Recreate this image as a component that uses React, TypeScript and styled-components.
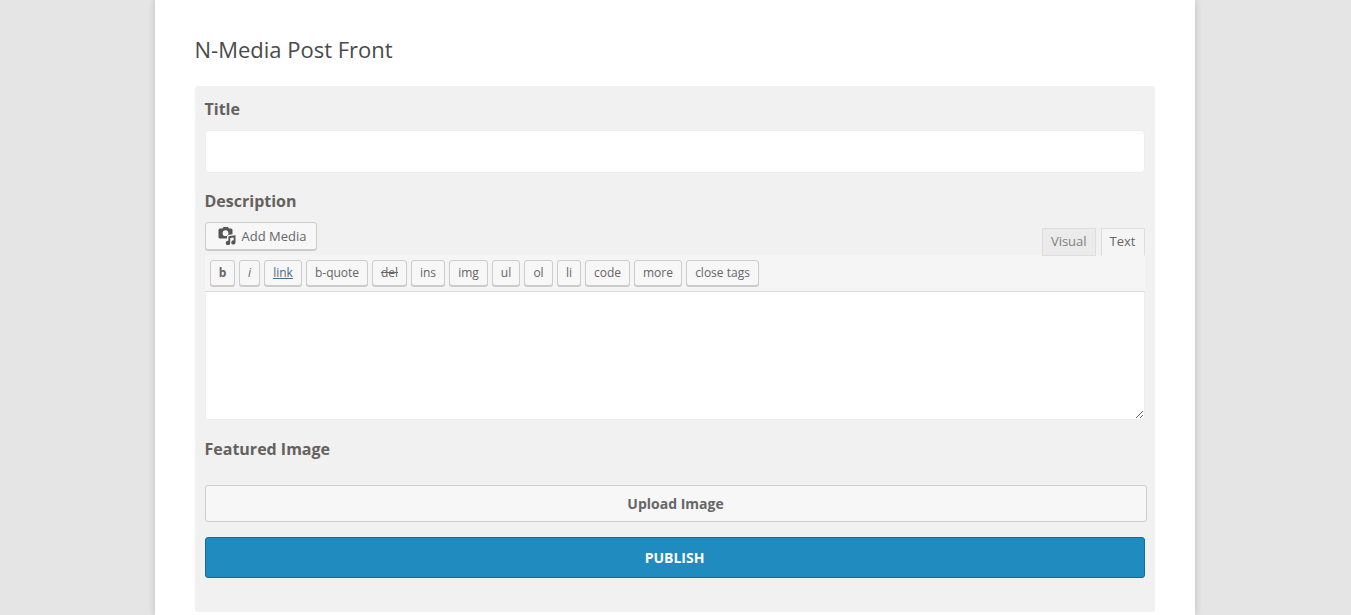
import React from "react";
import styled, { createGlobalStyle } from "styled-components";

const Global = createGlobalStyle`
  html, body { margin: 0; padding: 0; background: #e5e5e5; overflow: hidden; }
  body { font-family: "Open Sans", "Liberation Sans", sans-serif; color: #555; }
  * { box-sizing: border-box; }
`;

const Page = styled.div`
  width: 1351px;
  height: 615px;
  overflow: hidden;
  display: flex;
  justify-content: center;
  padding-right: 1px;
`;

const Card = styled.main`
  width: 1040px;
  height: 615px;
  flex: none;
  margin-left: -1px;
  background: #fff;
  box-shadow: 0 0 7px rgba(0, 0, 0, 0.18);
  padding: 34px 40px 0;
`;

const Heading = styled.h1`
  margin: 0 0 21px;
  font-size: 22px;
  line-height: 31px;
  font-weight: 400;
  color: #4a4a4a;
`;

const Form = styled.form`
  height: 526px;
  background: #f1f1f1;
  border-radius: 3px;
  padding: 10px;
  display: flex;
  flex-direction: column;
`;

const Label = styled.label<{ $mt?: number }>`
  display: block;
  font-size: 16px;
  line-height: 26px;
  font-weight: 700;
  color: #65615d;
  margin-top: ${(p) => p.$mt ?? 0}px;
`;

const TitleInput = styled.input`
  display: block;
  width: 940px;
  height: 43px;
  margin-top: 8px;
  border: 1px solid #eee;
  border-radius: 4px;
  background: #fff;
  outline: none;
`;

const EditorTop = styled.div`
  display: flex;
  justify-content: space-between;
  align-items: flex-end;
  height: 34px;
  width: 940px;
  margin-top: 8px;
`;

const MediaButton = styled.button`
  align-self: flex-start;
  display: inline-flex;
  align-items: center;
  width: 112px;
  height: 28px;
  padding: 0 0 0 12px;
  border: 1px solid #ccc;
  border-radius: 3px;
  background: #f7f7f7;
  box-shadow: 0 1px 0 #ccc;
  font: 400 13px "Open Sans", sans-serif;
  color: #666;
`;

const MediaIcon = styled.svg`
  width: 18px;
  height: 18px;
  margin-right: 6px;
  fill: #555;
  flex: none;
`;

const Tabs = styled.div`
  display: flex;
  gap: 5px;
  position: relative;
  z-index: 1;
`;

const Tab = styled.button<{ $active?: boolean }>`
  height: 28px;
  padding: 0 8px 2px;
  border: 1px solid #ddd;
  border-bottom-color: ${(p) => (p.$active ? "#f5f5f5" : "#ddd")};
  background: ${(p) => (p.$active ? "#f5f5f5" : "#ebebeb")};
  font: 400 13px "Open Sans", sans-serif;
  color: ${(p) => (p.$active ? "#666" : "#808080")};
`;

const Toolbar = styled.div`
  width: 940px;
  height: 37px;
  padding: 5px 5px 0;
  margin-top: -1px;
  display: flex;
  gap: 4px;
  background: #f5f5f5;
  border-bottom: 1px solid #ddd;
`;

const QuickTag = styled.button<{ $w: number; $bold?: boolean; $italic?: boolean; $link?: boolean; $strike?: boolean }>`
  width: ${(p) => p.$w}px;
  height: 26px;
  padding: 0 0 1px 1px;
  border: 1px solid #ccc;
  border-radius: 3px;
  background: #f7f7f7;
  box-shadow: 0 1px 0 #ccc;
  font-family: "Open Sans", sans-serif;
  font-size: 12px;
  font-weight: ${(p) => (p.$bold ? 700 : 400)};
  font-style: ${(p) => (p.$italic ? "italic" : "normal")};
  text-decoration: ${(p) => (p.$link ? "underline" : p.$strike ? "line-through" : "none")};
  color: ${(p) => (p.$link ? "#4a6a85" : "#666")};
`;

const TextArea = styled.textarea`
  display: block;
  width: 940px;
  height: 128px;
  border: 1px solid #eee;
  border-top: 0;
  border-radius: 0 0 3px 3px;
  background: #fff;
  outline: none;
  resize: vertical;
`;

const UploadButton = styled.button`
  display: block;
  width: 942px;
  height: 37px;
  margin-top: 23px;
  flex: none;
  border: 1px solid #ccc;
  border-radius: 3px;
  background: #f7f7f7;
  font: 700 14px "Open Sans", sans-serif;
  color: #666;
`;

const PublishButton = styled.button`
  display: block;
  width: 940px;
  height: 41px;
  margin-top: 15px;
  flex: none;
  border: 1px solid #0b6f9f;
  border-radius: 3px;
  background: #1f8bbf;
  font: 700 14px "Open Sans", sans-serif;
  color: #fff;
`;

const tags = [
  { t: "b", w: 25, bold: true },
  { t: "i", w: 21, italic: true },
  { t: "link", w: 38, link: true },
  { t: "b-quote", w: 62 },
  { t: "del", w: 35, strike: true },
  { t: "ins", w: 34 },
  { t: "img", w: 39 },
  { t: "ul", w: 28 },
  { t: "ol", w: 29 },
  { t: "li", w: 24 },
  { t: "code", w: 45 },
  { t: "more", w: 48 },
  { t: "close tags", w: 73 },
];

export default function App() {
  return (
    <Page>
      <Global />
      <Card>
        <Heading>N-Media Post Front</Heading>
        <Form onSubmit={(e) => e.preventDefault()}>
          <Label>Title</Label>
          <TitleInput type="text" />
          <Label $mt={15}>Description</Label>
          <EditorTop>
            <MediaButton type="button">
              <MediaIcon viewBox="0 0 18 18" aria-hidden="true">
                <path fillRule="evenodd" d="M2 1.500h2.500l1-1.500h4.500l1 1.500H13A1.500 1.500 0 0 1 14.500 3V7.300L9 8v3.500H2A1.500 1.500 0 0 1 .5 10V3A1.500 1.500 0 0 1 2 1.500Zm5.500 1.800a2.900 2.900 0 1 0 0 5.800a2.900 2.900 0 0 0 0-5.800Z" />
                <path d="M10.400 9.300 17.500 8.300v7.200a2.100 2.100 0 1 1-1.800-2.100V10.400l-3.500.5v5a2.200 2.200 0 1 1-1.800-2.100Z" />
              </MediaIcon>
              Add Media
            </MediaButton>
            <Tabs>
              <Tab type="button">Visual</Tab>
              <Tab type="button" $active>Text</Tab>
            </Tabs>
          </EditorTop>
          <Toolbar>
            {tags.map((q) => (
              <QuickTag key={q.t} type="button" $w={q.w} $bold={q.bold} $italic={q.italic} $link={q.link} $strike={q.strike}>
                {q.t}
              </QuickTag>
            ))}
          </Toolbar>
          <TextArea />
          <Label $mt={16}>Featured Image</Label>
          <UploadButton type="button">Upload Image</UploadButton>
          <PublishButton type="submit">PUBLISH</PublishButton>
        </Form>
      </Card>
    </Page>
  );
}
